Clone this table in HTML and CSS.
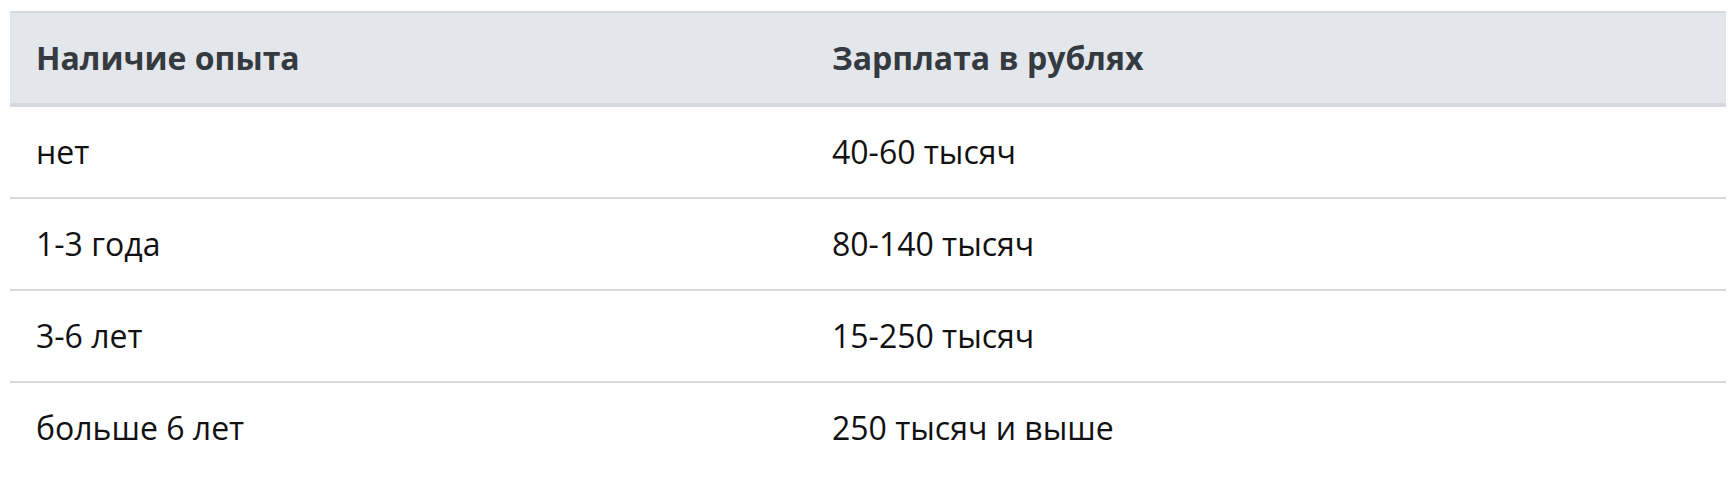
FILE: index.html
```html
<!DOCTYPE html>
<html lang="ru">
<head>
<meta charset="utf-8">
<title>Зарплата</title>
<link rel="stylesheet" href="styles.css">
</head>
<body>
<div class="wrap">
<table class="salary">
  <thead>
    <tr><th class="col-exp">Наличие опыта</th><th>Зарплата в рублях</th></tr>
  </thead>
  <tbody>
    <tr><td>нет</td><td>40-60 тысяч</td></tr>
    <tr><td>1-3 года</td><td>80-140 тысяч</td></tr>
    <tr><td>3-6 лет</td><td>15-250 тысяч</td></tr>
    <tr><td>больше 6 лет</td><td>250 тысяч и выше</td></tr>
  </tbody>
</table>
</div>
</body>
</html>
```
FILE: styles.css
```css
html, body {
  margin: 0;
  padding: 0;
  background: #ffffff;
}
.wrap {
  padding: 11px 8px 0 10px;
}
.salary {
  width: 100%;
  border-collapse: collapse;
  font-family: "Open Sans", "Noto Sans", sans-serif;
  font-size: 32px;
  line-height: 50px;
  color: #111111;
}
.salary th {
  text-align: left;
  font-weight: 700;
  color: #343a40;
  background: #e3e6ea;
  padding: 20px 26px;
  border-top: 2px solid #d6d9dd;
  border-bottom: 4px solid #d6d9dd;
}
.salary .col-exp {
  width: 744px;
}
.salary td {
  padding: 20px 26px;
  border-top: 2px solid #d6d9dd;
}
.salary tbody tr:first-child td {
  border-top: none;
}
```
